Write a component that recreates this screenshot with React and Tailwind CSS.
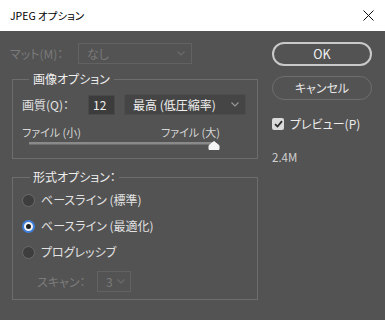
import React from 'react';

const font = { fontFamily: '"Noto Sans CJK JP", "Noto Sans", sans-serif', fontFeatureSettings: '"palt"' };

const Chevron = ({ color = '#9a9a9a' }) => (
  <svg width="8" height="5" viewBox="0 0 8 5" fill="none">
    <path d="M0.5 0.5 L4 4 L7.5 0.5" stroke={color} strokeWidth="1.1" />
  </svg>
);

const Radio = ({ checked, label }) => (
  <label className="flex items-center h-[20px] gap-[6px]">
    {checked ? (
      <span className="w-[13px] h-[13px] rounded-full bg-[#f2f2f2] border-2 border-[#3f7fdc] flex items-center justify-center">
        <span className="w-[5px] h-[5px] rounded-full bg-[#1e1e1e]" />
      </span>
    ) : (
      <span className="w-[13px] h-[13px] rounded-full bg-[#3e3e3e] border border-[#6a6a6a]" />
    )}
    <span className="text-[12px] text-[#e2e2e2] leading-[16px]">{label}</span>
  </label>
);

export default function App() {
  return (
    <div className="w-[385px] h-[320px] overflow-hidden bg-[#535353] select-none" style={font}>
      {/* title bar */}
      <div className="h-[31px] bg-white flex items-center justify-between pl-[10px] pr-[11px]">
        <span className="text-[10.5px] text-black">JPEG オプション</span>
        <svg width="11" height="11" viewBox="0 0 11 11">
          <path d="M0.5 0.5 L10.5 10.5 M10.5 0.5 L0.5 10.5" stroke="#111" strokeWidth="1" />
        </svg>
      </div>

      <div className="flex h-[289px]">
        {/* left column */}
        <div className="w-[262px] pl-[10px]">
          <div className="mt-[12px] h-[21px] flex items-center">
            <span className="w-[68px] text-[12px] text-[#7a7a7a]">マット(M)：</span>
            <div className="w-[114px] h-[21px] border border-[#626262] flex items-center justify-between pl-[8px] pr-[6px]">
              <span className="text-[12px] text-[#7a7a7a]">なし</span>
              <Chevron color="#6c6c6c" />
            </div>
          </div>

          <fieldset className="mt-[7px] ml-[2px] w-[246px] h-[88px] border border-[#6d6d6d] pl-[9px] pr-[10px]">
            <legend className="ml-[7px] px-[4px] text-[12px] leading-[16px] text-[#f0f0f0]">画像オプション</legend>
            <div className="mt-[7px] h-[21px] flex items-center">
              <span className="w-[66px] text-[12px] text-[#e2e2e2]">画質(Q)：</span>
              <div className="w-[27px] h-[20px] bg-[#3c3c3c] border border-[#4a4a4a] flex items-center pl-[4px] text-[12px] text-[#f0f0f0]">12</div>
              <div className="ml-[9px] w-[122px] h-[21px] bg-[#454545] border border-[#4d4d4d] rounded-[2px] flex items-center justify-between pl-[8px] pr-[6px]">
                <span className="text-[12px] text-[#f0f0f0]">最高 (低圧縮率)</span>
                <Chevron />
              </div>
            </div>
            <div className="mt-[9px] flex text-[11px] leading-[16px] text-[#d6d6d6]">
              <span className="w-[139px]">ファイル (小)</span>
              <span>ファイル (大)</span>
            </div>
            <div className="relative ml-[7px] h-[10px]">
              <div className="mt-[2px] w-[186px] h-[3px] bg-[#8a8a8a] border-b border-[#6e6e6e]" />
              <svg className="absolute left-[179px] top-[-1px]" width="12" height="9" viewBox="0 0 12 9">
                <path d="M1 4.5 L6 0.5 L11 4.5 L11 8.5 L1 8.5 Z" fill="#f4f4f4" stroke="#f4f4f4" strokeWidth="1" strokeLinejoin="round" />
              </svg>
            </div>
          </fieldset>

          <fieldset className="mt-[10px] ml-[2px] w-[246px] h-[131px] border border-[#6d6d6d] pl-[9px]">
            <legend className="ml-[8px] px-[3px] text-[12px] leading-[16px] text-[#f0f0f0]">形式オプション：</legend>
            <div className="mt-[5px] flex flex-col gap-[6px]">
              <Radio label="ベースライン (標準)" />
              <Radio checked label="ベースライン (最適化)" />
              <Radio label="プログレッシブ" />
            </div>
            <div className="mt-[9px] h-[21px] flex items-center pl-[15px]">
              <span className="w-[60px] text-[12px] text-[#7c7c7c]">スキャン：</span>
              <div className="w-[34px] h-[21px] border border-[#626262] flex items-center justify-between pl-[8px] pr-[5px]">
                <span className="text-[12px] text-[#7c7c7c]">3</span>
                <Chevron color="#6c6c6c" />
              </div>
            </div>
          </fieldset>
        </div>

        {/* right column */}
        <div className="ml-[10px] w-[100px] flex flex-col">
          <button className="mt-[11px] h-[24px] rounded-full border-2 border-[#c9c9c9] text-[12.5px] text-[#f2f2f2]">OK</button>
          <button className="mt-[10px] h-[24px] rounded-full border border-[#6e6e6e] text-[12px] text-[#e6e6e6]">キャンセル</button>
          <div className="mt-[18px] h-[12px] flex items-center gap-[6px]">
            <span className="w-[12px] h-[12px] rounded-[2px] bg-[#dadada] flex items-center justify-center">
              <svg width="9" height="8" viewBox="0 0 9 8">
                <path d="M1 4.2 L3.5 6.5 L8 1.2" stroke="#2a2a2a" strokeWidth="1.8" fill="none" />
              </svg>
            </span>
            <span className="text-[12px] text-[#ececec]">プレビュー(P)</span>
          </div>
          <span className="mt-[19px] text-[11.5px] leading-[16px] text-[#cfcfcf]">2.4M</span>
        </div>
      </div>
    </div>
  );
}
